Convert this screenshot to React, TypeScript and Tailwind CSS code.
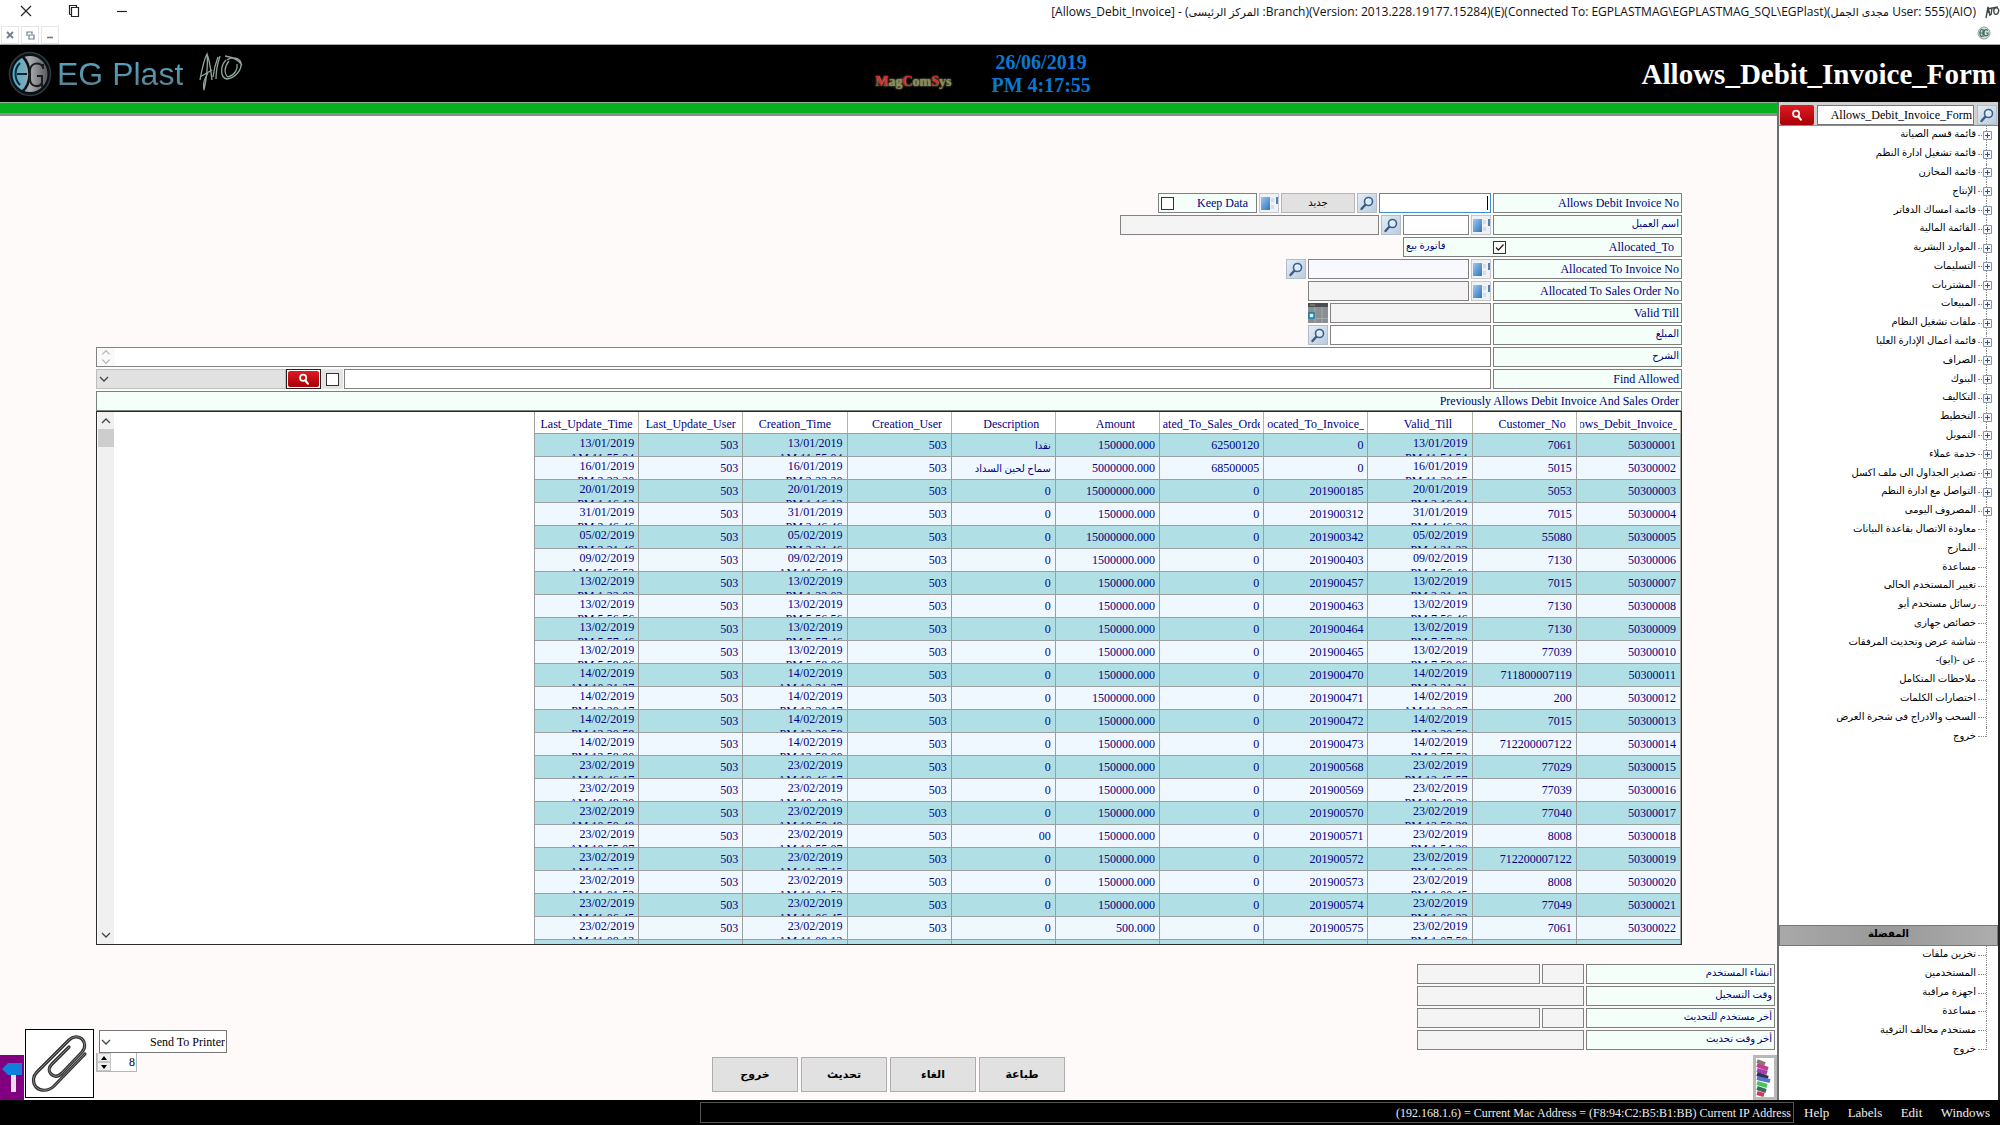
import React from 'react';

const columns = [
  'Last_Update_Time',
  'Last_Update_User',
  'Creation_Time',
  'Creation_User',
  'Description',
  'Amount',
  'Allocated_To_Sales_Order_No',
  'Allocated_To_Invoice_No',
  'Valid_Till',
  'Customer_No',
  'Allows_Debit_Invoice_No',
];

const sortable = ['Creation_User', 'Description', 'Amount', 'Valid_Till', 'Customer_No'];

// date, update time, creation time, description, amount, sales order, invoice, valid time, customer, number
const rows = [
  ['13/01/2019', 'AM 11:55:04', 'AM 11:55:04', 'نقدا', '150000.000', '62500120', '0', 'PM 11:54:54', '7061', '50300001'],
  ['16/01/2019', 'PM 2:22:20', 'PM 2:22:20', 'سماح لحين السداد', '5000000.000', '68500005', '0', 'PM 11:20:15', '5015', '50300002'],
  ['20/01/2019', 'PM 1:16:12', 'PM 1:16:12', '0', '15000000.000', '0', '201900185', 'PM 2:16:04', '5053', '50300003'],
  ['31/01/2019', 'PM 2:46:46', 'PM 2:46:46', '0', '150000.000', '0', '201900312', 'PM 4:46:30', '7015', '50300004'],
  ['05/02/2019', 'PM 2:21:46', 'PM 2:21:46', '0', '15000000.000', '0', '201900342', 'PM 4:21:33', '55080', '50300005'],
  ['09/02/2019', 'AM 11:56:52', 'AM 11:56:48', '0', '1500000.000', '0', '201900403', 'PM 1:56:40', '7130', '50300006'],
  ['13/02/2019', 'PM 1:22:02', 'PM 1:22:02', '0', '150000.000', '0', '201900457', 'PM 2:21:42', '7015', '50300007'],
  ['13/02/2019', 'PM 5:56:56', 'PM 5:56:56', '0', '150000.000', '0', '201900463', 'PM 7:56:46', '7130', '50300008'],
  ['13/02/2019', 'PM 5:57:46', 'PM 5:57:46', '0', '150000.000', '0', '201900464', 'PM 7:57:38', '7130', '50300009'],
  ['13/02/2019', 'PM 5:58:06', 'PM 5:58:06', '0', '150000.000', '0', '201900465', 'PM 7:58:06', '77039', '50300010'],
  ['14/02/2019', 'AM 10:21:27', 'AM 10:21:27', '0', '150000.000', '0', '201900470', 'PM 2:21:21', '711800007119', '50300011'],
  ['14/02/2019', 'PM 12:20:17', 'PM 12:20:17', '0', '1500000.000', '0', '201900471', 'AM 11:20:07', '200', '50300012'],
  ['14/02/2019', 'PM 12:20:58', 'PM 12:20:58', '0', '150000.000', '0', '201900472', 'PM 2:20:50', '7015', '50300013'],
  ['14/02/2019', 'PM 12:58:00', 'PM 12:58:00', '0', '150000.000', '0', '201900473', 'PM 2:57:52', '712200007122', '50300014'],
  ['23/02/2019', 'AM 10:46:17', 'AM 10:46:17', '0', '150000.000', '0', '201900568', 'PM 12:45:57', '77029', '50300015'],
  ['23/02/2019', 'AM 10:48:39', 'AM 10:48:39', '0', '150000.000', '0', '201900569', 'PM 12:48:29', '77039', '50300016'],
  ['23/02/2019', 'AM 10:50:40', 'AM 10:50:40', '0', '150000.000', '0', '201900570', 'PM 12:50:28', '77040', '50300017'],
  ['23/02/2019', 'AM 10:55:07', 'AM 10:55:07', '00', '150000.000', '0', '201900571', 'PM 1:54:28', '8008', '50300018'],
  ['23/02/2019', 'AM 11:27:15', 'AM 11:27:15', '0', '150000.000', '0', '201900572', 'PM 1:26:02', '712200007122', '50300019'],
  ['23/02/2019', 'AM 11:01:52', 'AM 11:01:52', '0', '150000.000', '0', '201900573', 'PM 1:00:45', '8008', '50300020'],
  ['23/02/2019', 'AM 11:06:45', 'AM 11:06:45', '0', '150000.000', '0', '201900574', 'PM 1:06:33', '77049', '50300021'],
  ['23/02/2019', 'AM 11:08:12', 'AM 11:08:12', '0', '500.000', '0', '201900575', 'PM 1:07:58', '7061', '50300022'],
];

const menu = [
  'قائمة قسم الصيانة',
  'قائمة تشغيل ادارة النظم',
  'قائمة المخازن',
  'الإنتاج',
  'قائمة امساك الدفاتر',
  'القائمة المالية',
  'الموارد البشرية',
  'التسليمات',
  'المشتريات',
  'المبيعات',
  'ملفات تشغيل النظام',
  'قائمة أعمال الإدارة العليا',
  'الصراف',
  'البنوك',
  'التكاليف',
  'التخطيط',
  'التمويل',
  'خدمة عملاء',
  'تصدير الجداول الى ملف اكسل',
  'التواصل مع ادارة النظم',
  'المصروف اليومى',
  'معاودة الاتصال بقاعدة البيانات',
  'النمازج',
  'مساعدة',
  'تغيير المستخدم الحالى',
  'رسائل مستخدم أيو',
  'خصائص جهازى',
  'شاشة عرض وتحديث المرفقات',
  'عن -(ايو)-',
  'ملاحظات المتكامل',
  'اختصارات الكلمات',
  'السحب والادراج فى شجرة العرض',
  'خروج',
];

const favourites = ['تخزين ملفات', 'المستخدمين', 'اجهزة مراقبة', 'مساعدة', 'مستخدم مخالف الترقية', 'خروج'];

const labelBox =
  'flex h-5 w-[189px] shrink-0 items-center justify-end border border-[#7c807e] bg-[#f5fffa] px-[2px] text-[12px] leading-4 text-[#00007f]';
const arabicLabel =
  'flex h-5 w-[189px] shrink-0 items-center justify-end border border-[#7c807e] bg-[#f5fffa] px-[2px] pb-[2px] text-[10px] leading-4 text-[#00007f]';
const field = 'h-5 min-w-0 border border-[#828282] bg-white px-1 text-right text-[12px] outline-none';
const grayField = 'h-5 min-w-0 border border-[#828282] bg-[#f4f4f4] px-1 text-right text-[12px] outline-none';

function SearchTile({ name }: { name: string }) {
  return (
    <button type="button" aria-label={name} className="h-5 w-5 shrink-0 border border-[#b4bcc6] bg-linear-to-br from-[#e3ecf5] to-[#b9cde0]">
      <svg viewBox="0 0 18 18" className="block h-full w-full">
        <path d="M7.5 10.5 3.5 15" stroke="#3d5a80" strokeWidth="2.4" strokeLinecap="round" />
        <circle cx="10.5" cy="7.5" r="4" fill="#d8ebfa" stroke="#3d5f8a" strokeWidth="1.6" />
        <path d="M8.5 7a2.2 2.2 0 0 1 2-1.8" fill="none" stroke="#fff" strokeWidth="1" />
      </svg>
    </button>
  );
}

function WindowTile({ name }: { name: string }) {
  return (
    <button type="button" aria-label={name} className="h-5 w-5 shrink-0 border border-[#c3c7cc] bg-[#eef2f6]">
      <svg viewBox="0 0 18 18" className="block h-full w-full">
        <defs>
          <linearGradient id="pane" x1="0" y1="0" x2="1" y2="1">
            <stop offset="0" stopColor="#9cc8ef" />
            <stop offset="1" stopColor="#2f74bb" />
          </linearGradient>
        </defs>
        <path d="M1 3h9v13H1z" fill="url(#pane)" />
        <path d="M11 4h3v4h-3zM11 11h3v4h-3z" fill="#d5dde5" />
        <path d="M16 3h2v7h-2z" fill="#4f82b5" />
      </svg>
    </button>
  );
}

function RedSearch({ name }: { name: string }) {
  return (
    <button
      type="button"
      aria-label={name}
      className="flex h-full w-full items-center justify-center rounded-[2px] bg-linear-to-b from-[#df1a20] to-[#a80007]"
    >
      <svg viewBox="0 0 14 14" className="h-3 w-3">
        <circle cx="6" cy="5.5" r="3.6" fill="none" stroke="#fff" strokeWidth="2" />
        <path d="m8.5 8.5 3 4" stroke="#fff" strokeWidth="2.4" strokeLinecap="round" />
      </svg>
    </button>
  );
}

function Chevron({ up = false }: { up?: boolean }) {
  return (
    <svg viewBox="0 0 10 10" className="pointer-events-none h-[10px] w-[10px]">
      <path d={up ? 'M1 7l4-4 4 4' : 'M1 3l4 4 4-4'} fill="none" stroke="#444" strokeWidth="1.3" />
    </svg>
  );
}

function TitleBar() {
  return (
    <div className="flex h-[45px] shrink-0 justify-between border-b border-[#a9a9a9] bg-white">
      <div>
        <div className="flex h-[22px] items-center gap-9 pl-5 text-black">
          <button aria-label="Close">
            <svg viewBox="0 0 12 12" className="h-3 w-3">
              <path d="M1 1l10 10M11 1 1 11" stroke="#222" strokeWidth="1.2" />
            </svg>
          </button>
          <button aria-label="Restore">
            <svg viewBox="0 0 12 12" className="h-3 w-3">
              <path d="M3.5 2.5h7v9h-7zM1.5 9.5v-9h7v2M1.5 9.5h2" fill="none" stroke="#222" strokeWidth="1.2" />
            </svg>
          </button>
          <button aria-label="Minimize">
            <svg viewBox="0 0 12 12" className="h-3 w-3">
              <path d="M1 6.5h10" stroke="#222" strokeWidth="1.2" />
            </svg>
          </button>
        </div>
        <div className="flex gap-[2px] pt-1 pl-px">
          <button aria-label="Close form" className="flex h-[18px] w-[18px] items-center justify-center border border-[#e6e6e6]">
            <svg viewBox="0 0 8 8" className="h-2 w-2">
              <path d="M1 1l6 6M7 1 1 7" stroke="#6f7d8f" strokeWidth="1.8" />
            </svg>
          </button>
          <button aria-label="Restore form" className="flex h-[18px] w-[18px] items-center justify-center border border-[#e6e6e6]">
            <svg viewBox="0 0 9 9" className="h-[9px] w-[9px]">
              <path d="M3 4h5v4H3zM1 5V1h5v2" fill="none" stroke="#6f7d8f" strokeWidth="1.2" />
            </svg>
          </button>
          <button aria-label="Minimize form" className="flex h-[18px] w-[18px] items-center justify-center border border-[#e6e6e6]">
            <svg viewBox="0 0 8 8" className="h-2 w-2">
              <path d="M1 6.5h6" stroke="#6f7d8f" strokeWidth="1.6" />
            </svg>
          </button>
        </div>
      </div>
      <div className="flex flex-col items-end">
        <div className="flex h-6 items-center gap-2">
          <span className="font-['Open_Sans','DejaVu_Sans',sans-serif] text-[12px] whitespace-nowrap text-[#111]">
            [Allows_Debit_Invoice] - (<span className="text-[11px]">المركز الرئيسى</span> :Branch)(Version:
            2013.228.19177.15284)(E)(Connected To: EGPLASTMAG\EGPLASTMAG_SQL\EGPlast)(
            <span className="text-[11px]">مجدى الجمل</span> User: 555)(AIO)
          </span>
          <svg viewBox="0 0 16 14" className="h-[14px] w-4">
            <path d="M2 13 4 2l2 9M3 7h3M8 3 7 10M10 4c3-3 6 0 4 4-2 3-5 1-4-4M3 4l11-2" fill="none" stroke="#3b4a45" strokeWidth="1.4" />
          </svg>
        </div>
        <svg viewBox="0 0 14 14" className="mt-[2px] mr-[9px] h-[14px] w-[14px]">
          <circle cx="7" cy="7" r="6" fill="#d9ddda" stroke="#8fa39b" />
          <path d="M5 3C2 5 2 9 5 11M6 3v8M3 7h3M11 4.5c-3-2-4 0-4 2.5s1 4 4 2V7H9" fill="none" stroke="#3f6f62" strokeWidth="1.2" />
        </svg>
      </div>
    </div>
  );
}

function Banner() {
  return (
    <header className="flex h-[57px] shrink-0 items-center bg-black pr-1 pl-2">
      <div className="flex flex-1 items-center">
        <svg viewBox="0 0 44 46" className="h-[46px] w-11">
          <defs>
            <linearGradient id="coin" x1="0" y1="0" x2="1" y2="0">
              <stop offset="0" stopColor="#3fb2d4" />
              <stop offset="0.35" stopColor="#7fa9b8" />
              <stop offset="0.5" stopColor="#a9abad" />
              <stop offset="1" stopColor="#5a5a5e" />
            </linearGradient>
          </defs>
          <ellipse cx="22" cy="23" rx="20.5" ry="21.5" fill="#0a1013" stroke="#2f3a40" strokeWidth="1.5" />
          <ellipse cx="22" cy="23" rx="17.5" ry="18" fill="url(#coin)" />
          <path d="M14 5c10 9 10 27 0 36" fill="none" stroke="#0b1114" strokeWidth="2.5" />
          <path d="M12 12c-6 6-6 16 0 22M9 23h10" fill="none" stroke="#10242c" strokeWidth="2" />
          <path d="M35 18v-5M35 16c-3-5-12-5-13 3v9c0 8 9 9 12 4v-7h-5M34 25v11" fill="none" stroke="#1c1c1f" strokeWidth="2" />
        </svg>
        <span className="ml-[5px] bg-linear-to-b from-[#4fb0d0] to-[#5b7885] bg-clip-text font-['Liberation_Sans',sans-serif] text-[32px] leading-10 text-transparent">
          EG Plast
        </span>
        <svg viewBox="0 0 46 40" className="mb-1 ml-[15px] h-10 w-[46px]" fill="none" stroke="#8fa79b" strokeWidth="1.3">
          <path d="M2 28C4 17 6 7 9 2c1 8 0 24-3 36C5 34 6 27 10 21M9 2c3 7 4 18 5 26M2 25l12-7" />
          <path d="M18 27C18 19 20 10 22 4M15 25c1-8 3-15 5-20" />
          <path d="M28 8c-6 6-6 18 1 19 8-1 15-9 14-16-1-5-9-7-14-3M31 9c-5 6-5 13-1 16 7-2 10-8 9-13M27 4c7 1 13 3 17 9" />
        </svg>
      </div>
      <div className="mr-[38px] flex items-center gap-10">
        <span className="pt-4 text-[14px] leading-5 font-bold text-[#8a8c5a] [text-shadow:0_0_2px_#c9c98c]">
          <b className="text-[#e0252e]">M</b>ag<b className="text-[#e0252e]">C</b>om<b className="text-[#e0252e]">S</b>ys
        </span>
        <div className="text-center text-[20px] leading-[23px] font-bold text-[#0a78d2]">
          <div>26/06/2019</div>
          <div>PM 4:17:55</div>
        </div>
      </div>
      <h1 className="flex-1 text-right text-[29px] leading-9 font-bold text-white">Allows_Debit_Invoice_Form</h1>
    </header>
  );
}

function InvoiceForm() {
  return (
    <form className="flex flex-col gap-[2px] pt-[77px]">
      <div className="flex justify-end gap-[2px]">
        <label className="flex h-5 w-[99px] items-center justify-between border border-[#7c807e] bg-[#f5fffa] pr-2 pl-[2px] text-[12px] text-[#00007f]">
          <input type="checkbox" className="h-[13px] w-[13px] appearance-none border border-[#333] bg-white" />
          Keep Data
        </label>
        <WindowTile name="Keep data list" />
        <button type="button" className="h-5 w-[74px] border border-[#b5b5b5] bg-[#e1e1e1] text-[10px] leading-4 text-black">
          جديد
        </button>
        <SearchTile name="Find invoice" />
        <div className="flex h-5 w-[112px] items-center border border-[#3c8fd0] bg-white pr-[2px]">
          <input id="invoice-no" className="h-4 min-w-0 flex-1 px-1 text-right text-[12px] outline-none" />
          <span className="h-[14px] w-px bg-black" />
        </div>
        <label htmlFor="invoice-no" className={labelBox}>Allows Debit Invoice No</label>
      </div>
      <div className="flex justify-end gap-[2px]">
        <input aria-label="Customer name" readOnly className={`${grayField} w-[259px]`} />
        <SearchTile name="Find customer" />
        <input id="customer" className={`${field} w-[66px]`} />
        <WindowTile name="Customer list" />
        <label htmlFor="customer" className={arabicLabel}>اسم العميل</label>
      </div>
      <div className="flex justify-end">
        <div className="flex h-5 w-[279px] items-center border border-[#7c807e] bg-[#f5fffa] text-[12px] leading-4 text-[#00007f]">
          <span className="w-[89px] pb-[2px] pl-[2px] text-[10px]">فاتورة بيع</span>
          <span className="relative h-[13px] w-[13px]">
            <input id="allocated" type="checkbox" defaultChecked className="block h-[13px] w-[13px] appearance-none border border-[#333] bg-white" />
            <svg viewBox="0 0 13 13" className="pointer-events-none absolute inset-0 h-[13px] w-[13px]">
              <path d="m3 6.5 2.5 2.5L10.5 3.5" fill="none" stroke="#222" strokeWidth="1.3" />
            </svg>
          </span>
          <label htmlFor="allocated" className="flex-1 pr-[7px] text-right">Allocated_To</label>
        </div>
      </div>
      <div className="flex justify-end gap-[2px]">
        <SearchTile name="Find allocated invoice" />
        <input id="to-invoice" className="h-5 w-[161px] border border-[#828282] bg-[#f8f8ff] px-1 outline-none" />
        <WindowTile name="Invoice list" />
        <label htmlFor="to-invoice" className={labelBox}>Allocated To Invoice No</label>
      </div>
      <div className="flex justify-end gap-[2px]">
        <input id="to-order" readOnly className={`${grayField} w-[161px]`} />
        <WindowTile name="Sales order list" />
        <label htmlFor="to-order" className={labelBox}>Allocated To Sales Order No</label>
      </div>
      <div className="flex justify-end gap-[2px]">
        <button type="button" aria-label="Pick date" className="h-5 w-5 bg-[#8b8f92]">
          <svg viewBox="0 0 20 20" className="h-5 w-5">
            <path d="M0 0h20v4H0z" fill="#4c4f52" />
            <path d="M2 2h5" stroke="#999" />
            <path d="M7 4v16M14 4v16M0 15.5h20" stroke="#a4a8aa" />
            <path d="M1 10h5v5H1z" fill="#d9f1fb" stroke="#0a7fa8" strokeWidth="1.5" />
          </svg>
        </button>
        <input id="valid-till" readOnly className={`${grayField} w-[161px]`} />
        <label htmlFor="valid-till" className={labelBox}>Valid Till</label>
      </div>
      <div className="flex justify-end gap-[2px]">
        <SearchTile name="Find amount" />
        <input id="amount" className={`${field} w-[161px]`} />
        <label htmlFor="amount" className={arabicLabel}>المبلغ</label>
      </div>
      <div className="flex gap-[2px]">
        <div className="flex h-5 flex-1 border border-[#828282] bg-white">
          <div className="flex w-[18px] flex-col items-center justify-center bg-[#f2f2f2] opacity-40">
            <Chevron up />
            <Chevron />
          </div>
          <textarea id="notes" className="h-full flex-1 resize-none outline-none" />
        </div>
        <label htmlFor="notes" className={arabicLabel}>الشرح</label>
      </div>
      <div className="flex">
        <div className="relative h-5 w-[190px] bg-[#e1e1e1]">
          <select aria-label="Search field" className="h-5 w-full appearance-none border border-[#bdbdbd] bg-[#e1e1e1]" />
          <span className="pointer-events-none absolute top-[5px] left-[3px]">
            <Chevron />
          </span>
        </div>
        <div className="h-5 w-[35px] border border-[#222] bg-white p-px">
          <RedSearch name="Search allowed" />
        </div>
        <div className="mr-px flex h-5 w-[22px] items-center justify-center bg-[#e4e4e4]">
          <input type="checkbox" aria-label="Exact match" className="h-[13px] w-[13px] appearance-none border border-[#333] bg-white" />
        </div>
        <input id="find" className={`${field} mr-[2px] flex-1`} />
        <label htmlFor="find" className={labelBox}>Find Allowed</label>
      </div>
      <div className="flex h-5 items-center justify-end border border-[#7c807e] bg-[#f5fffa] px-[2px] text-[12px] text-[#00007f]">
        Previously Allows Debit Invoice And Sales Order
      </div>
    </form>
  );
}

function Cell({ children, time }: { children?: React.ReactNode; time?: string }) {
  return (
    <td className="border-r border-b border-[#9c9f9f] p-0">
      <div className={time ? 'h-[22px] overflow-hidden pt-[2px] pr-1 leading-[15px]' : 'h-[22px] overflow-hidden pr-1 leading-[22px]'}>
        {children}
        {time && <div>{time}</div>}
      </div>
    </td>
  );
}

function InvoiceTable() {
  return (
    <div className="flex min-h-0 flex-1 justify-between overflow-hidden border border-[#2b2b2b] bg-white">
      <div className="ml-px flex w-4 flex-col items-center bg-[#f0f0f0] pt-1 pb-1">
        <Chevron up />
        <div className="mt-[3px] h-[18px] w-full bg-[#cdcdcd]" />
        <div className="mt-auto">
          <Chevron />
        </div>
      </div>
      <table className="h-fit w-[1147px] table-fixed border-separate border-spacing-0 border-l border-[#9c9f9f] text-right text-[12px] text-[#00007f]">
        <thead>
          <tr>
            {columns.map((c) => (
              <th key={c} className="border-b border-[#9c9f9f] p-0 font-normal">
                <div className="flex h-[21px] justify-center overflow-hidden border-r border-[#b5b3a8] bg-white px-[3px] leading-6">
                  <div className={sortable.includes(c) ? 'flex min-w-0 justify-center overflow-hidden pl-4' : 'flex min-w-0 justify-center overflow-hidden'}>
                    <span>{c}</span>
                  </div>
                </div>
              </th>
            ))}
          </tr>
        </thead>
        <tbody>
          {rows.map(([date, updated, created, text, amount, order, invoice, valid, customer, no]) => (
            <tr key={no} className="odd:bg-[#b0e0e6] even:bg-[#f0f8ff]">
              <Cell time={updated}>{date}</Cell>
              <Cell>503</Cell>
              <Cell time={created}>{date}</Cell>
              <Cell>503</Cell>
              <Cell>
                <span className={text.startsWith('0') ? 'text-[12px]' : 'text-[10px]'}>{text}</span>
              </Cell>
              <Cell>{amount}</Cell>
              <Cell>{order}</Cell>
              <Cell>{invoice}</Cell>
              <Cell time={valid}>{date}</Cell>
              <Cell>{customer}</Cell>
              <Cell>{no}</Cell>
            </tr>
          ))}
          <tr className="bg-[#b0e0e6]">
            {columns.map((c) => (
              <Cell key={c} />
            ))}
          </tr>
        </tbody>
      </table>
    </div>
  );
}

function AuditFields() {
  return (
    <div className="flex flex-col gap-[2px]">
      <div className="flex gap-[2px]">
        <input aria-label="Creator name" readOnly className={`${grayField} w-[123px]`} />
        <input id="creator" readOnly className={`${grayField} w-[42px]`} />
        <label htmlFor="creator" className={arabicLabel}>انشاء المستخدم</label>
      </div>
      <div className="flex gap-[2px]">
        <input id="created" readOnly className={`${grayField} w-[167px]`} />
        <label htmlFor="created" className={arabicLabel}>وقت التسجيل</label>
      </div>
      <div className="flex gap-[2px]">
        <input aria-label="Updater name" readOnly className={`${grayField} w-[123px]`} />
        <input id="updater" readOnly className={`${grayField} w-[42px]`} />
        <label htmlFor="updater" className={arabicLabel}>أخر مستخدم للتحديث</label>
      </div>
      <div className="flex gap-[2px]">
        <input id="updated" readOnly className={`${grayField} w-[167px]`} />
        <label htmlFor="updated" className={arabicLabel}>أخر وقت تحديث</label>
      </div>
    </div>
  );
}

function PrintTools() {
  return (
    <div className="flex items-end">
      <button aria-label="Pin panel" className="h-[45px] w-6 bg-[#800080]">
        <svg viewBox="0 0 24 45" className="h-[45px] w-6">
          <path d="M2 14 8 8h14v12H8z" fill="#0f7fdc" />
          <path d="M11 20h5v17h-5z" fill="#eadcf0" />
        </svg>
      </button>
      <button aria-label="Attachments" className="mb-[2px] ml-px h-[69px] w-[69px] border border-black bg-white">
        <svg viewBox="0 0 67 67" className="h-full w-full" fill="none" strokeLinecap="round">
          <path d="M59 24 28 56c-6 6-14 5-18 1-4-5-3-11 1-15L43 10c4-4 10-4 13-1s4 9 0 13L36 43c-4 4-8 4-11 1s-2-7 1-10l17-17" stroke="#333" strokeWidth="3.2" />
          <path d="M59 24 28 56c-6 6-14 5-18 1-4-5-3-11 1-15L43 10c4-4 10-4 13-1s4 9 0 13L36 43c-4 4-8 4-11 1s-2-7 1-10l17-17" stroke="#999" strokeWidth="0.8" />
        </svg>
      </button>
      <div className="mb-7 ml-[2px]">
        <div className="relative ml-[3px]">
          <select
            aria-label="Output"
            dir="rtl"
            className="block h-[23px] w-[128px] appearance-none border border-[#777] bg-white px-px text-[12px] text-black outline-none"
          >
            <option>Send To Printer</option>
          </select>
          <span className="pointer-events-none absolute top-[7px] left-[2px]">
            <Chevron />
          </span>
        </div>
        <div className="flex h-[19px] w-[41px] items-center border border-t-0 border-[#b5b5b5] bg-white">
          <div className="flex w-[14px] flex-col">
            <button aria-label="More copies" className="flex h-[9px] items-center justify-center border border-[#c5c5c5] bg-[#efefef]">
              <svg viewBox="0 0 6 4" className="h-1 w-[6px]">
                <path d="M0 4h6L3 0z" />
              </svg>
            </button>
            <button aria-label="Fewer copies" className="flex h-[9px] items-center justify-center border border-[#c5c5c5] bg-[#efefef]">
              <svg viewBox="0 0 6 4" className="h-1 w-[6px]">
                <path d="M0 0h6L3 4z" />
              </svg>
            </button>
          </div>
          <input aria-label="Copies" defaultValue="8" className="w-6 text-right text-[12px] text-black outline-none" />
        </div>
      </div>
    </div>
  );
}

function Tree({ items, branches }: { items: string[]; branches: number }) {
  return (
    <ul dir="rtl" className="grid h-full auto-rows-fr pr-[6px]">
      {items.map((item, i) => (
        <li key={item} className="flex min-h-0 items-center text-[10px] leading-4 text-black">
          <span className="relative flex w-[10px] items-center justify-center self-stretch">
            <span
              className={
                i === items.length - 1
                  ? 'absolute top-0 bottom-1/2 left-1 border-l border-dotted border-[#888]'
                  : 'absolute top-0 bottom-0 left-1 border-l border-dotted border-[#888]'
              }
            />
            {i < branches && (
              <svg viewBox="0 0 9 9" className="relative h-[9px] w-[9px]">
                <path d="M.5.5h8v8h-8z" fill="#f3f6fa" stroke="#8796a8" />
                <path d="M2 4.5h5M4.5 2v5" stroke="#34507c" />
              </svg>
            )}
          </span>
          <span className={i < branches ? 'w-1 border-t border-dotted border-[#888]' : '-mr-1 w-2 border-t border-dotted border-[#888]'} />
          <a href="#" className="pr-[2px] pb-[2px] whitespace-nowrap">{item}</a>
        </li>
      ))}
    </ul>
  );
}

function Sidebar() {
  return (
    <aside className="flex w-[223px] shrink-0 flex-col border-r-2 border-l-2 border-r-[#222] border-l-[#6f6f6f] bg-white">
      <div className="flex h-6 shrink-0 items-end gap-[3px] border-b border-[#8a8a8a] bg-[#d0d0d0] px-px">
        <div className="h-5 w-[34px]">
          <RedSearch name="Search menu" />
        </div>
        <input
          aria-label="Form name"
          defaultValue="Allows_Debit_Invoice_Form"
          className="h-5 min-w-0 flex-1 border border-[#777] bg-white px-px text-right text-[12px] text-black outline-none"
        />
        <SearchTile name="Find form" />
      </div>
      <nav className="h-[620px] shrink-0">
        <Tree items={menu} branches={21} />
      </nav>
      <h2 className="mt-auto flex h-[21px] shrink-0 items-center justify-center border border-[#777] bg-linear-to-r from-[#a8a8a8] via-[#999] to-[#adadad] pb-1 text-[10px] font-bold text-black">
        المفضلة
      </h2>
      <nav className="mb-[41px] h-[113px] shrink-0">
        <Tree items={favourites} branches={0} />
      </nav>
    </aside>
  );
}

function StatusBar() {
  return (
    <footer className="flex h-[25px] shrink-0 items-center bg-black text-[13px] text-[#eee]">
      <div className="ml-[35%] flex h-[21px] flex-1 items-center justify-end border border-[#555] px-[2px] text-[12px]">
        (192.168.1.6) = Current Mac Address = (F8:94:C2:B5:B1:BB) Current IP Address
      </div>
      <nav className="flex w-[206px] justify-between pr-[10px] pl-[10px]">
        <a href="#">Help</a>
        <a href="#">Labels</a>
        <a href="#">Edit</a>
        <a href="#">Windows</a>
      </nav>
    </footer>
  );
}

export default function App() {
  return (
    <div className="flex h-screen flex-col overflow-hidden bg-white font-['Liberation_Serif','DejaVu_Sans',serif]">
      <TitleBar />
      <Banner />
      <div className="flex min-h-0 flex-1">
        <main className="flex min-w-0 flex-1 flex-col bg-[#fffafa]">
          <div className="h-[14px] shrink-0 border-t border-b-3 border-t-[#8fb598] border-b-[#8c8c8c] bg-[#06b01f]" />
          <div className="flex min-h-0 flex-1 flex-col pr-[95px] pl-24">
            <InvoiceForm />
            <InvoiceTable />
          </div>
          <div className="flex h-[155px] shrink-0 items-end justify-between">
            <PrintTools />
            <div className="mb-2 ml-[133px] flex gap-[3px]">
              {['خروج', 'تحديث', 'الغاء', 'طباعة'].map((t) => (
                <button key={t} className="h-[35px] w-[86px] border border-[#adadad] bg-[#e1e1e1] text-[11px] font-bold text-black">
                  {t}
                </button>
              ))}
            </div>
            <div className="flex flex-col items-end self-stretch pt-[19px]">
              <div className="mr-[2px]">
                <AuditFields />
              </div>
              <button aria-label="Colours" className="mt-auto h-[45px] w-6 border-3 border-[#b9b9b9] bg-white">
                <svg viewBox="0 0 18 39" className="h-full w-full" fill="none" strokeWidth="4">
                  <path d="m1 3 8 3" stroke="#8c7a68" />
                  <path d="m1 7 11 4" stroke="#c23a9a" />
                  <path d="m1 12 10 3" stroke="#a03fb0" />
                  <path d="m1 16 11 4" stroke="#2d3050" />
                  <path d="m1 20 13 3" stroke="#5a6fd0" />
                  <path d="m1 25 10 3" stroke="#45c455" />
                  <path d="m1 30 9 3" stroke="#3b6b60" />
                  <path d="m1 35 7 2" stroke="#d03a55" />
                </svg>
              </button>
            </div>
          </div>
        </main>
        <Sidebar />
      </div>
      <StatusBar />
    </div>
  );
}
